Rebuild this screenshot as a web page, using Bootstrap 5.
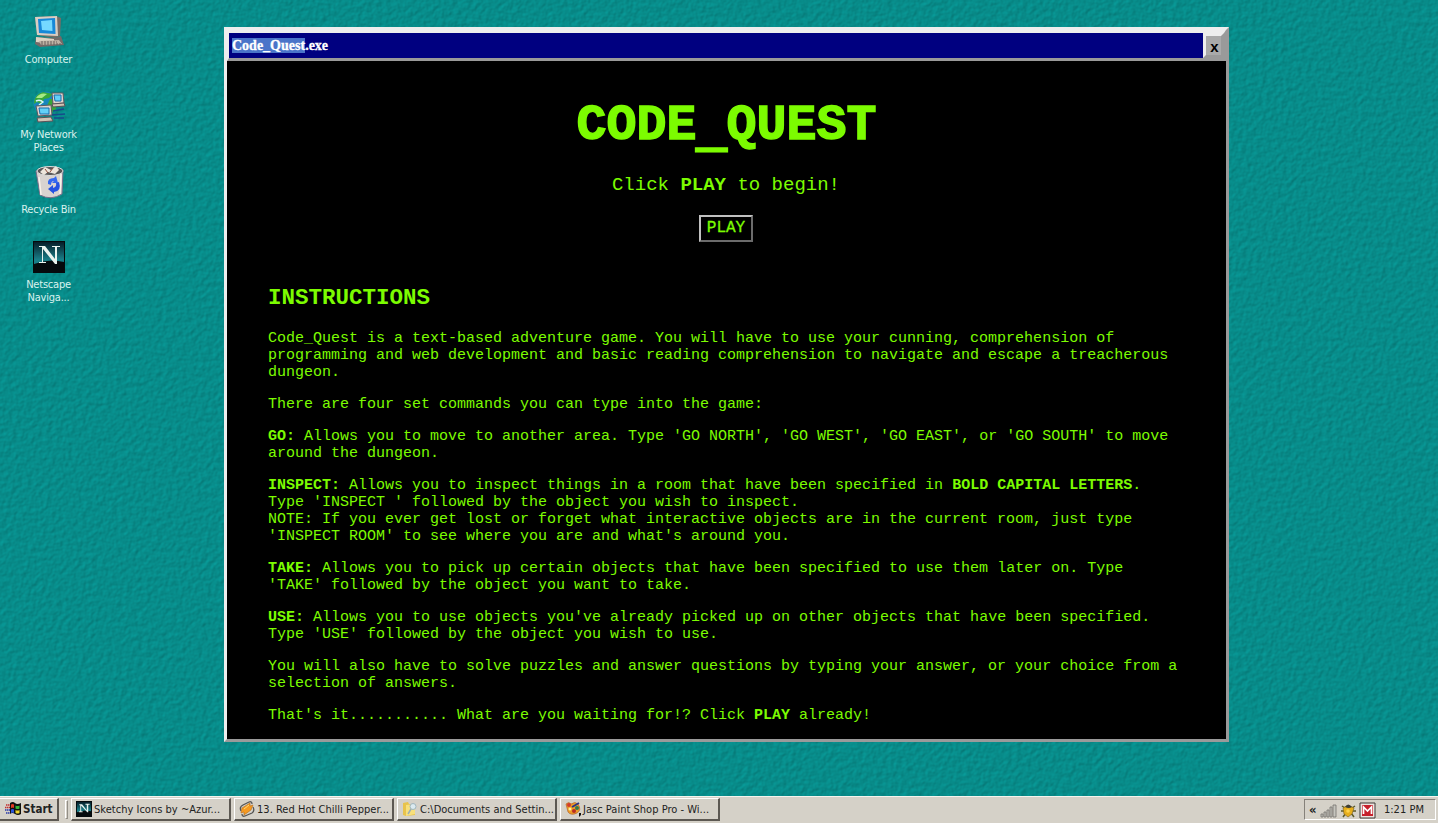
<!DOCTYPE html>
<html lang="en">
<head>
<meta charset="utf-8">
<title>Code_Quest</title>
<link rel="stylesheet" href="https://cdn.jsdelivr.net/npm/bootstrap@5.3.0/dist/css/bootstrap.min.css">
<script src="https://cdn.jsdelivr.net/npm/bootstrap@5.3.0/dist/js/bootstrap.bundle.min.js"></script>
<style>
body{background:#078985;font-family:"DejaVu Sans Condensed","DejaVu Sans",sans-serif;font-stretch:condensed}
.wallpaper{z-index:0}
.desk-icon{width:97px;height:75px;font-size:11px;line-height:13px;color:#d8f2ee;letter-spacing:-.22px}
.desk-icon svg{width:34px;height:34px;margin-bottom:4px;flex:none}
.side{width:97px;padding-top:15px}
.main-area{height:796px}
.win{width:1005px;height:715px;margin:27px 0 0 127px;border:3px solid;border-color:#eee #9a9a9a #9a9a9a #eee;background:#000}
.title-bar{height:31px;border:solid;border-width:3px 2px;border-color:#eee #9a9a9a #9a9a9a #eee;background:#000080;color:#fff;font:bold 14px/16px "Liberation Serif",serif}
.title-bar .caption{padding:5px 0 0 3px;-webkit-text-stroke:.3px #fff}
.sel{background:#4a74c9}
.close-btn{width:21px;border:3px solid;border-color:#eee #9a9a9a #9a9a9a #eee;background:#aaa;color:#000;font:bold 15px/19px "Liberation Sans",sans-serif;padding:1px 0 0 2px;border-radius:0}
.screen{font-family:"Liberation Mono",monospace;color:#7cfc00;font-size:15px;line-height:17px;padding:0 41px}
.screen h1{font-size:50px;line-height:56px;font-weight:700;margin:37px 0 0;-webkit-text-stroke:1.4px #7cfc00}
.low-bar{position:relative;top:7px;-webkit-text-stroke-width:3px}
.tagline{font-size:19px;line-height:22px;margin:20px 0 19px;padding-right:1px}
.play-btn{font-size:16px;line-height:18px;width:54px;height:27px;border:2px solid;border-color:#c0c0c0 #6b6b6b #6b6b6b #c0c0c0;background:#000;color:#7cfc00;padding:0 0 2px 1px;-webkit-text-stroke:.3px #7cfc00;position:relative;left:-1px}
.screen h2{font-size:22.5px;line-height:26px;font-weight:700;margin:43px 0 19px}
.screen p.para{margin:0 0 15px}
.task-bar{height:27px;background:#d5d1c8;border-top:1px solid #f5f4ee;font-size:11px;color:#222;letter-spacing:.02px;padding:1px 2px 2px 0}
.task-btn{width:160px;height:23px;margin-right:3px;padding:2px 0 0 4px;border:solid;border-width:1px 2px 2px 1px;border-color:#fff #5c5852 #5c5852 #fff;white-space:nowrap}
.task-btn svg{width:16px;height:16px;margin:-2px 2px 0 0;flex:none}
.start-btn{width:59px;margin-right:6px;font-weight:700;font-size:11.5px;padding:2px 0 0 5px;border-left:0}
.grip{width:3px;height:19px;border:1px solid;border-color:#fff #928e86 #928e86 #fff;margin-right:3px}
.tray{width:132px;height:21px;border:1px solid;border-color:#85817a #fff #fff #85817a;padding:1px 11px 0 4px}
.arrows{font-size:13px}
</style>
</head>
<body class="vh-100 overflow-hidden position-relative">
<svg class="wallpaper position-absolute top-0 start-0 w-100 h-100" aria-hidden="true">
  <filter id="emboss" x="0" y="0" width="100%" height="100%" color-interpolation-filters="sRGB">
    <feTurbulence type="fractalNoise" baseFrequency=".2" numOctaves="2" seed="8" result="n"/>
    <feDiffuseLighting in="n" surfaceScale=".4" diffuseConstant="1.22" lighting-color="#08918f">
      <feDistantLight azimuth="225" elevation="52"/>
    </feDiffuseLighting>
  </filter>
  <rect width="100%" height="100%" filter="url(#emboss)"/>
</svg>

<div class="position-relative d-flex flex-column vh-100">
  <main class="main-area d-flex align-items-start">
    <div class="side d-flex flex-column">
      <div class="desk-icon d-flex flex-column align-items-center text-center">
        <svg viewBox="0 0 34 34"><path d="M3 2 24 1l5 2-1 18-5 2L5 20z" fill="#776c66"/><path d="m3 2 22-1 1 20L5 20z" fill="#d9cec4"/><path d="m6 4 17-1 .5 16L7 18z" fill="#1788d8"/><path d="m9 6 11-1 .5 11L10 15z" fill="#75d9ff"/><path d="m4 22 19 1 6-2 3 9-24 2-5-3z" fill="#756a68"/><path d="m4 22 18 2v5l-18-2z" fill="#ddd3c4"/><path d="m7 26 20-1 3 4-21 1z" fill="#beb2a4"/><path d="M9 29h20M9 27h16" stroke="#665c5b" stroke-dasharray="2 1"/></svg>
        <span>Computer</span>
      </div>
      <div class="desk-icon d-flex flex-column align-items-center text-center">
        <svg viewBox="0 0 34 34"><circle cx="13" cy="13" r="11.500" fill="#1586bd"/><path d="M2 14Q2 4 11 2l10 2-4 4-5 1-2 5-5-2zm16-5 6 0v10l-6 5-3-8z" fill="#37a839"/><path d="M4 8q4-6 11-4l-5 4z" fill="#a7e985"/><path d="M4 11q4-2 7 1l-4 3" stroke="#d7f4fa" stroke-width="1.500" fill="none"/><path d="M20 3h11l1 10-11 1zM4 16l15-1 1 10-14 1z" fill="#ded5cd" stroke="#5e5861"/><path d="M22 5h7v6h-6zM7 18h10v6H8z" fill="#62d0f7" stroke="#176cae"/><path d="m20 14 12-1 1 3-12 1zM5 28l14-1 2 4-15 1z" fill="#d0c3b4" stroke="#5a5157"/><path d="m21 21 11-2M20 25l13-1M22 28h10" stroke="#174a8a" stroke-width="1.500"/></svg>
        <span>My Network<br>Places</span>
      </div>
      <div class="desk-icon d-flex flex-column align-items-center text-center">
        <svg viewBox="0 0 34 34"><path d="M4 6q12-6 27-1l-1 24q-11 7-22 1z" fill="#d9d3d0" stroke="#766d8a"/><path d="M7 12q1 8 2 18M29 9l-1 20" stroke="#f8f1e9" stroke-width="1.500" fill="none"/><ellipse cx="18" cy="6" rx="13" ry="4.500" fill="#585657" stroke="#ddd"/><path d="m8 7 5-5 6 3 5-4 3 4-4 4-7-2-4 3z" fill="#ede5dc"/><path d="m13 4 3 4m5-5-3 4" stroke="#8b4b39"/><path d="M16 19q-1-6 6-6l2-2 2 7h-6l2-2q-3 0-3 4z" fill="#3468f0"/><path d="M27 17q3 9-5 10l0 2-6-5 5-4v3q4-1 3-5z" fill="#2452e2"/></svg>
        <span>Recycle Bin</span>
      </div>
      <div class="desk-icon d-flex flex-column align-items-center text-center">
        <svg viewBox="0 0 34 34"><defs><linearGradient id="sky" x2="0" y2="1"><stop stop-color="#061d28"/><stop offset=".8" stop-color="#197e88"/></linearGradient></defs><path fill="#050a0d" d="M1 1h32v32H1z"/><path fill="url(#sky)" d="M2 2h30v20Q17 18 2 24z"/><path d="M7 6h6l10 13V7h-3V6h8v1h-3v17h-2L11 9v13h3v1H7v-1h3V7H7z" fill="#e9f3ef"/></svg>
        <span>Netscape<br>Naviga...</span>
      </div>
    </div>

    <section class="win d-flex flex-column">
      <header class="title-bar d-flex justify-content-between flex-shrink-0">
        <div class="caption"><span class="sel">Code_Quest</span>.exe</div>
        <button class="close-btn text-center" type="button">x</button>
      </header>
      <div class="screen">
        <div class="text-center">
          <h1>CODE<span class="low-bar">_</span>QUEST</h1>
          <p class="tagline">Click <b>PLAY</b> to begin!</p>
          <button class="play-btn d-block mx-auto" type="button">PLAY</button>
        </div>
        <h2>INSTRUCTIONS</h2>
        <p class="para">Code_Quest is a text-based adventure game. You will have to use your cunning, comprehension of programming and web development and basic reading comprehension to navigate and escape a treacherous dungeon.</p>
        <p class="para">There are four set commands you can type into the game:</p>
        <p class="para"><b>GO:</b> Allows you to move to another area. Type 'GO NORTH', 'GO WEST', 'GO EAST', or 'GO SOUTH' to move around the dungeon.</p>
        <p class="para"><b>INSPECT:</b> Allows you to inspect things in a room that have been specified in <b>BOLD CAPITAL LETTERS</b>.<br>Type 'INSPECT ' followed by the object you wish to inspect.<br>NOTE: If you ever get lost or forget what interactive objects are in the current room, just type 'INSPECT ROOM' to see where you are and what's around you.</p>
        <p class="para"><b>TAKE:</b> Allows you to pick up certain objects that have been specified to use them later on. Type 'TAKE' followed by the object you want to take.</p>
        <p class="para"><b>USE:</b> Allows you to use objects you've already picked up on other objects that have been specified. Type 'USE' followed by the object you wish to use.</p>
        <p class="para">You will also have to solve puzzles and answer questions by typing your answer, or your choice from a selection of answers.</p>
        <p class="para">That's it........... What are you waiting for!? Click <b>PLAY</b> already!</p>
      </div>
    </section>
  </main>

  <footer class="task-bar d-flex align-items-center">
    <div class="task-btn start-btn d-flex align-items-center"><svg viewBox="0 0 16 16"><path d="M5 2q3-2 5 0t6 0v11q-3 2-6 0t-5 0z" fill="#111"/><path d="M6 3.500q2-1 3 0v3.500q-1-1-3 0z" fill="#e33a22"/><path d="M10.500 4.500q2 1 4 0v3q-2 1-4 0z" fill="#35b737"/><path d="M6 8.500q2-1 3 0v3.500q-1-1-3 0z" fill="#2956dd"/><path d="M10.500 9q2 1 4 0v3q-2 1-4 0z" fill="#f1d62c"/><path d="M1 4h4M0 6.500h5" stroke="#c22e2e" stroke-width="1.500" stroke-dasharray="1.500 .5"/><path d="M0 9h5M1 12h4" stroke="#2939a8" stroke-width="1.500" stroke-dasharray="1.500 .5"/></svg><span>Start</span></div>
    <div class="grip"></div>
    <div class="task-btn d-flex align-items-center"><svg viewBox="0 0 34 34"><path fill="#050a0d" d="M0 0h34v34H0z"/><path fill="url(#sky)" d="M2 2h30v20Q17 18 2 24z"/><path d="M7 7h6l10 13V8h-3V6h9v2h-3v16h-2L11 10v12h3v2H6v-2h3V9H7z" fill="#e9f3ef"/></svg><span>Sketchy Icons by ~Azur...</span></div>
    <div class="task-btn d-flex align-items-center"><svg viewBox="0 0 16 16"><path d="M2 10Q0 6 4 4l6-3q3-1 3 2M14 6q2 4-1 6l-7 3q-3 1-3-2" fill="none" stroke="#555" stroke-width="1.300"/><path d="m3 7 8-5 0 3 3-1-2 5-7 5 0-3-3 1z" fill="#f59a22" stroke="#b66b1c" stroke-width=".6"/><path d="m5 8 5-4" stroke="#ffda76"/></svg><span>13. Red Hot Chilli Pepper...</span></div>
    <div class="task-btn d-flex align-items-center"><svg viewBox="0 0 16 16"><path d="m1 2 5-1 1 2h6v11l-9 1-3-1z" fill="#e8c34c"/><path d="m4 4 9-1v10l-9 2z" fill="#f8e07c"/><circle cx="11" cy="5.500" r="3" fill="#dbeaf0" stroke="#a0b5bd"/><path d="m9 8-3 5" stroke="#9bafb5" stroke-width="1.500"/></svg><span>C:\Documents and Settin...</span></div>
    <div class="task-btn d-flex align-items-center"><svg viewBox="0 0 16 16"><path d="M1 3q3-3 5 0 4-3 7 0 4 6-1 9-6 3-9-1z" fill="#ed9c27" stroke="#a85523" stroke-width=".6"/><circle cx="4" cy="4" r="2" fill="#d33b2b"/><circle cx="5" cy="8" r="1.500" fill="#fff09a"/><circle cx="9" cy="10" r="2" fill="#b82c24"/><circle cx="12" cy="7" r="2" fill="#317a4d"/><path d="m7 6 7-4" stroke="#2b3585" stroke-width="2"/><path d="M14 12h2v2l-2 2z" fill="#111"/></svg><span>Jasc Paint Shop Pro - Wi...</span></div>
    <div class="tray ms-auto d-flex align-items-center justify-content-between">
      <b class="arrows">«</b>
      <svg width="17" height="15" viewBox="0 0 17 15"><path d="M1 11h2v3H1zM4 9h2v5H4zM7 7h2v7H7zM10 4h2v10h-2zM13 2h3v12h-3z" fill="#c6c5be" stroke="#74726c" stroke-width=".8"/></svg>
      <svg width="15" height="15" viewBox="0 0 15 15"><path d="m1 3 3 2M14 3l-3 2M0 8h4M15 8h-4M2 14l3-4M13 14l-3-4" stroke="#5b5a2b" stroke-width="1.500"/><path d="M2 5q5-4 11 0l-2 6-4 3-4-3z" fill="#e6ae1c" stroke="#775c20" stroke-width=".6"/><path d="M4 4q3-5 7 0-3 2-7 0z" fill="#3f3f35"/><circle cx="7" cy="8" r="1.800" fill="#ffd24a"/></svg>
      <svg width="17" height="17" viewBox="0 0 17 17"><path d="M1 1h15v15H1z" fill="#eee3df" stroke="#3d3836"/><path d="M3 3h11v11H3z" fill="#c6202c"/><path d="M4.500 12V5l4 4 4-4v7" fill="none" stroke="#fff" stroke-width="1.700"/></svg>
      <span class="ms-1">1:21 PM</span>
    </div>
  </footer>
</div>
</body>
</html>
